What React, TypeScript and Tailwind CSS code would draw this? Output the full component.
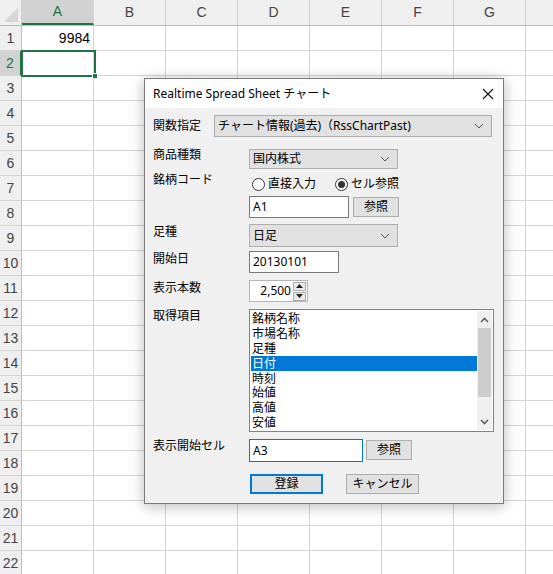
import React from 'react';

const cols = ['A', 'B', 'C', 'D', 'E', 'F', 'G', ''];
const rows = Array.from({ length: 22 }, (_, i) => i + 1);

const items = ['銘柄名称', '市場名称', '足種', '日付', '時刻', '始値', '高値', '安値'];

const Chevron: React.FC = () => (
    <svg width="10" height="6" viewBox="0 0 10 6" className="shrink-0">
        <path d="M1 1 L5 5 L9 1" fill="none" stroke="#555" strokeWidth="1" />
    </svg>
);

const Select: React.FC<{ value: string; className: string }> = ({ value, className }) => (
    <div className={`flex items-center justify-between bg-[#e1e1e1] border border-[#adadad] pl-[3px] pr-[7px] ${className}`}>
        <span className="leading-none">{value}</span>
        <Chevron />
    </div>
);

const Radio: React.FC<{ checked?: boolean; label: string }> = ({ checked, label }) => (
    <div className="flex items-center gap-[3px]">
        <div className="w-[13px] h-[13px] rounded-full border border-[#333] bg-white flex items-center justify-center">
            {checked && <div className="w-[7px] h-[7px] rounded-full bg-[#333]" />}
        </div>
        <span>{label}</span>
    </div>
);

const Btn: React.FC<{ label: string; className: string }> = ({ label, className }) => (
    <div className={`flex items-center justify-center bg-[#e1e1e1] border border-[#adadad] ${className}`}>{label}</div>
);

const App: React.FC = () => {
    return (
        <div className="relative w-[553px] h-[574px] overflow-hidden bg-white font-['Liberation_Sans',sans-serif]">

            {/* --- SHEET --- */}
            <div className="flex h-[26px] bg-[#efefef] border-b border-[#bdbdbd]">
                <div className="w-[22px] shrink-0 border-r border-[#cfcfcf] relative">
                    <div className="absolute right-[3px] bottom-[3px] w-0 h-0 border-l-[14px] border-l-transparent border-b-[14px] border-b-[#d6d6d6]" />
                </div>
                {cols.map((c, i) => (
                    <div
                        key={i}
                        className={`w-[72px] shrink-0 flex items-center justify-center text-[14px] border-r border-[#d4d4d4] ${c === 'A' ? 'bg-[#d2d2d2] text-[#217346] border-b-2 border-b-[#217346]' : 'text-[#444]'}`}
                    >
                        {c}
                    </div>
                ))}
            </div>
            {rows.map((r) => (
                <div key={r} className="flex h-[25px]">
                    <div className={`w-[22px] shrink-0 flex items-center justify-center text-[14px] border-b border-[#d4d4d4] ${r === 2 ? 'bg-[#d2d2d2] text-[#217346] border-r-2 border-r-[#217346]' : 'bg-[#efefef] text-[#444] border-r border-r-[#bdbdbd]'}`}>
                        {r}
                    </div>
                    {cols.map((c, i) => (
                        <div key={i} className="w-[72px] shrink-0 border-r border-b border-[#d4d4d4] flex items-center justify-end pr-[3px] text-[14px] text-black">
                            {c === 'A' && r === 1 ? '9984' : ''}
                        </div>
                    ))}
                </div>
            ))}

            {/* active cell A2 */}
            <div className="absolute left-[21px] top-[50px] w-[75px] h-[27px] border-2 border-[#217346]" />
            <div className="absolute left-[92px] top-[73px] w-[6px] h-[6px] bg-[#217346] border border-white" />

            {/* --- DIALOG --- */}
            <div className="absolute left-[144px] top-[78px] w-[360px] h-[426px] border border-[#7a7a7a] bg-[#f0f0f0] shadow-[0_2px_14px_rgba(0,0,0,0.28)] text-[12px] text-black font-['Noto_Sans','Noto_Sans_CJK_JP',sans-serif] flex flex-col">
                <div className="h-[29px] bg-white flex items-center justify-between pl-[8px] pr-[9px]">
                    <span>Realtime Spread Sheet チャート</span>
                    <svg width="12" height="12" viewBox="0 0 12 12">
                        <path d="M1 1 L11 11 M11 1 L1 11" stroke="#111" strokeWidth="1.1" />
                    </svg>
                </div>

                <div className="flex flex-col pl-[8px] leading-[16px]">
                    <div className="flex items-center mt-[7px] h-[22px]">
                        <span className="w-[61px]">関数指定</span>
                        <Select value="チャート情報(過去)（RssChartPast)" className="w-[278px] h-[22px]" />
                    </div>

                    <div className="flex items-start mt-[12px]">
                        <span className="w-[96px] -mt-[2px]">商品種類</span>
                        <Select value="国内株式" className="w-[149px] h-[20px]" />
                    </div>

                    <div className="flex items-center mt-[5px] h-[16px]">
                        <span className="w-[96px] -mt-[4px]">銘柄コード</span>
                        <div className="flex gap-[19px] pl-[3px] mt-[4px]">
                            <Radio label="直接入力" />
                            <Radio checked label="セル参照" />
                        </div>
                    </div>

                    <div className="flex items-center mt-[6px] pl-[96px] gap-[4px]">
                        <div className="w-[100px] h-[22px] bg-white border border-[#7a7a7a] flex items-center pl-[3px]">A1</div>
                        <Btn label="参照" className="w-[46px] h-[20px]" />
                    </div>

                    <div className="flex items-start mt-[6px]">
                        <span className="w-[96px]">足種</span>
                        <Select value="日足" className="w-[149px] h-[23px]" />
                    </div>

                    <div className="flex items-start mt-[4px]">
                        <span className="w-[96px]">開始日</span>
                        <div className="w-[90px] h-[22px] bg-white border border-[#7a7a7a] flex items-center pl-[3px]">20130101</div>
                    </div>

                    <div className="flex items-start mt-[7px]">
                        <span className="w-[96px]">表示本数</span>
                        <div className="w-[59px] h-[22px] bg-white border border-[#b5b5b5] flex items-center justify-end pr-[1px] gap-[2px]">
                            <span>2,500</span>
                            <div className="flex flex-col gap-[1px]">
                                <div className="w-[13px] h-[9px] bg-[#e8e8e8] border border-[#adadad] flex items-center justify-center">
                                    <svg width="7" height="4" viewBox="0 0 7 4"><path d="M0 4 L3.5 0 L7 4 Z" fill="#222" /></svg>
                                </div>
                                <div className="w-[13px] h-[9px] bg-[#e8e8e8] border border-[#adadad] flex items-center justify-center">
                                    <svg width="7" height="4" viewBox="0 0 7 4"><path d="M0 0 L3.5 4 L7 0 Z" fill="#222" /></svg>
                                </div>
                            </div>
                        </div>
                    </div>

                    <div className="flex items-start mt-[7px]">
                        <span className="w-[96px] -mt-[1px]">取得項目</span>
                        <div className="w-[245px] h-[123px] bg-white border border-[#828282] flex p-[1px]">
                            <div className="flex-1 flex flex-col">
                                {items.map((it) => (
                                    <div key={it} className={`h-[15px] leading-[15px] overflow-hidden pl-[1px] ${it === '日付' ? 'bg-[#0078d7] text-white' : ''}`}>{it}</div>
                                ))}
                            </div>
                            <div className="w-[15px] bg-[#f0f0f0] flex flex-col items-center">
                                <div className="h-[17px] flex items-center justify-center">
                                    <svg width="9" height="6" viewBox="0 0 9 6"><path d="M1 5 L4.5 1.5 L8 5" fill="none" stroke="#606060" strokeWidth="1.6" /></svg>
                                </div>
                                <div className="w-[13px] h-[69px] bg-[#cdcdcd]" />
                                <div className="flex-1" />
                                <div className="h-[17px] flex items-center justify-center">
                                    <svg width="9" height="6" viewBox="0 0 9 6"><path d="M1 1 L4.5 4.5 L8 1" fill="none" stroke="#606060" strokeWidth="1.6" /></svg>
                                </div>
                            </div>
                        </div>
                    </div>

                    <div className="flex items-start mt-[7px]">
                        <span className="w-[96px] -mt-[1px]">表示開始セル</span>
                        <div className="w-[114px] h-[23px] bg-white border border-[#0078d7] flex items-center pl-[3px]">A3</div>
                        <Btn label="参照" className="w-[46px] h-[20px] ml-[3px] mt-[1px]" />
                    </div>

                    <div className="flex items-center mt-[12px] pl-[97px] gap-[23px]">
                        <div className="w-[73px] h-[20px] bg-[#e1e1e1] border-2 border-[#0078d7] flex items-center justify-center">登録</div>
                        <Btn label="キャンセル" className="w-[73px] h-[20px]" />
                    </div>
                </div>
            </div>
        </div>
    );
};

export default App;
